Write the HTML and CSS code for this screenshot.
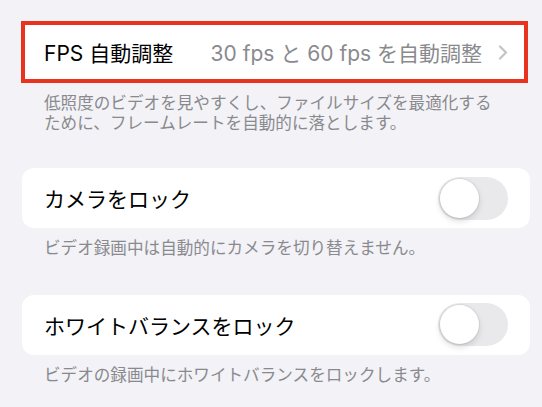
FILE: index.html
```html
<!DOCTYPE html>
<html lang="ja">
<head>
<meta charset="utf-8">
<link rel="stylesheet" href="styles.css">
</head>
<body>
<main class="page">
  <section class="group group-first">
    <div class="card card-highlight">
      <span class="label">FPS 自動調整</span>
      <span class="value">30 fps と 60 fps を自動調整</span>
      <svg class="chevron" width="10" height="15" viewBox="0 0 10 15" aria-hidden="true">
        <path d="M2 1.5 L8 7.5 L2 13.5" fill="none" stroke="#c4c4c7" stroke-width="2.2" stroke-linecap="round" stroke-linejoin="round"/>
      </svg>
    </div>
    <p class="footer">低照度のビデオを見やすくし、ファイルサイズを最適化する<br>ために、フレームレートを自動的に落とします。</p>
  </section>
  <section class="group">
    <div class="card">
      <span class="label">カメラをロック</span>
      <span class="toggle"><span class="knob"></span></span>
    </div>
    <p class="footer">ビデオ録画中は自動的にカメラを切り替えません。</p>
  </section>
  <section class="group">
    <div class="card">
      <span class="label">ホワイトバランスをロック</span>
      <span class="toggle"><span class="knob"></span></span>
    </div>
    <p class="footer">ビデオの録画中にホワイトバランスをロックします。</p>
  </section>
</main>
</body>
</html>
```
FILE: styles.css
```css
html, body {
  margin: 0;
  padding: 0;
  background: #f2f2f7;
}
body {
  font-family: "Inter", "Noto Sans CJK JP", sans-serif;
  color: #000;
}
.page {
  padding-top: 21px;
}
.group {
  margin-bottom: 36px;
}
.group-first {
  margin-bottom: 35px;
}
.card {
  box-sizing: border-box;
  margin-left: 22px;
  width: 508px;
  height: 60px;
  background: #fff;
  border-radius: 12px;
  display: flex;
  align-items: center;
  padding: 0 22px;
}
.card-highlight {
  margin-left: 21px;
  width: 507px;
  height: 62px;
  border: 4px solid #e8331f;
  border-radius: 0;
  padding: 0 16px 0 19px;
}
.label {
  font-size: 21px;
  flex: 1;
  white-space: nowrap;
}
.value {
  font-size: 21px;
  color: #8a8a8e;
  white-space: nowrap;
  margin-right: 16px;
}
.chevron {
  display: block;
  flex: none;
}
.toggle {
  position: relative;
  flex: none;
  width: 70px;
  height: 43px;
  border-radius: 22px;
  background: #e9e9eb;
}
.knob {
  position: absolute;
  left: 2px;
  top: 2px;
  width: 39px;
  height: 39px;
  border-radius: 50%;
  background: #fff;
  box-shadow: 0 0 0 1px rgba(0, 0, 0, 0.06), 0 3px 6px rgba(0, 0, 0, 0.14);
}
.footer {
  margin: 11px 0 0 44px;
  font-size: 16.6px;
  line-height: 19.5px;
  color: #8a8a8e;
}
```
